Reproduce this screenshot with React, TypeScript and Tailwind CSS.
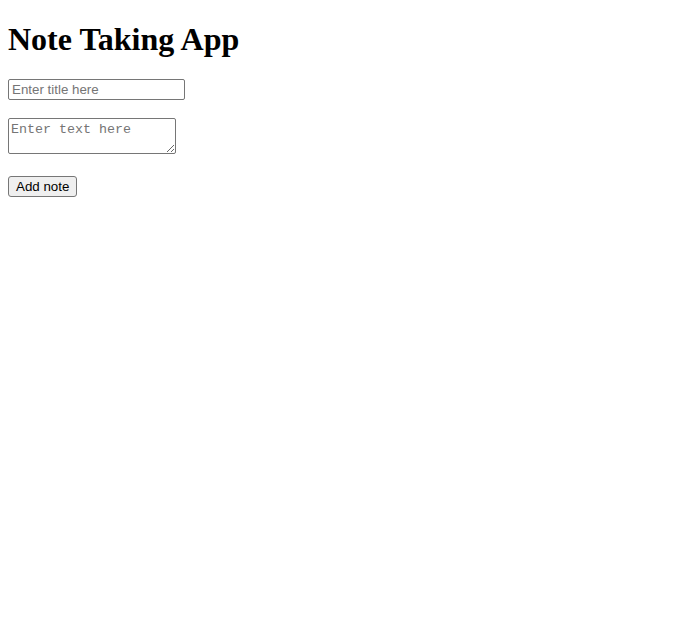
import React, { useState } from 'react';

const App = () => {
  const [title, setTitle] = useState('');
  const [text, setText] = useState('');

  return (
    <div className="min-h-screen bg-white p-2 text-black">
      {/* Heading */}
      <h1 className="mt-[13.4px] mb-[20.4px] text-[32px] leading-[37px] font-bold font-['Liberation_Serif',serif]">
        Note Taking App
      </h1>

      {/* Form */}
      <div className="flex flex-col items-start">
        <input
          type="text"
          value={title}
          onChange={e => setTitle(e.target.value)}
          placeholder="Enter title here"
          className="w-[177px] h-[21px] border border-[#767676] rounded-[2px] px-[3px] text-[13.33px] font-['Liberation_Sans',Arial,sans-serif] placeholder:text-[#757575]"
        />
        <textarea
          value={text}
          onChange={e => setText(e.target.value)}
          placeholder="Enter text here"
          className="mt-[18px] w-[168px] h-[36px] border border-[#767676] rounded-[2px] px-[2px] pt-[3px] pb-[1px] text-[13.33px] leading-[16px] font-['Liberation_Mono','DejaVu_Sans_Mono',monospace] placeholder:text-[#757575] resize"
        />
        <button className="mt-[22px] h-[21px] px-[7px] bg-[#efefef] border border-[#767676] rounded-[3px] text-[13.33px] font-['Liberation_Sans',Arial,sans-serif]">
          Add note
        </button>
      </div>
    </div>
  );
};

export default App;
